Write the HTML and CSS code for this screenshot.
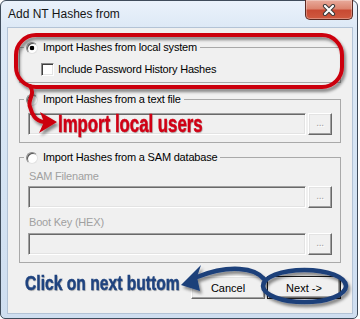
FILE: index.html
```html
<!DOCTYPE html>
<html>
<head>
<meta charset="utf-8">
<title>Add NT Hashes from</title>
<link rel="stylesheet" href="styles.css">
</head>
<body>
<div class="window">
  <div class="titlebar">
    <span class="title">Add NT Hashes from</span>
    <div class="close">
      <svg width="14" height="12" viewBox="0 0 14 12">
        <path d="M3 2 L11 10 M11 2 L3 10" stroke="#3a3a3a" stroke-width="4.2" stroke-linecap="round" fill="none"/>
        <path d="M3 2 L11 10 M11 2 L3 10" stroke="#ffffff" stroke-width="2.2" stroke-linecap="round" fill="none"/>
      </svg>
    </div>
  </div>
  <div class="client">
    <fieldset class="group g1">
      <legend><span class="radio on"></span>Import Hashes from local system</legend>
      <div class="check"><span class="box"></span>Include Password History Hashes</div>
    </fieldset>
    <fieldset class="group g2">
      <legend><span class="radio"></span>Import Hashes from a text file</legend>
      <div class="filerow first"><div class="field"></div><div class="browse">...</div></div>
    </fieldset>
    <fieldset class="group g3">
      <legend><span class="radio"></span>Import Hashes from a SAM database</legend>
      <div class="lbl first">SAM Filename</div>
      <div class="filerow f1"><div class="field"></div><div class="browse">...</div></div>
      <div class="lbl second">Boot Key (HEX)</div>
      <div class="filerow f2"><div class="field"></div><div class="browse">...</div></div>
    </fieldset>
    <div class="buttons">
      <div class="btn">Cancel</div>
      <div class="btn def">Next -&gt;</div>
    </div>
  </div>
</div>
<div class="overlay">
  <svg class="annot" width="360" height="319" viewBox="0 0 360 319">
    <defs>
      <filter id="sh" x="-20%" y="-30%" width="140%" height="170%">
        <feDropShadow dx="2" dy="3" stdDeviation="1.8" flood-color="#000" flood-opacity="0.45"/>
      </filter>
    </defs>
    <g filter="url(#sh)" fill="none" stroke="#cc0010" stroke-width="4" stroke-linecap="round">
      <rect x="16" y="35" width="326" height="52" rx="20"/>
      <path d="M30 86 C36 94 27 100 30 107 C32 114 35 121 44 122"/>
      <polygon points="57,122 40,112 44,122 39,133" fill="#cc0010" stroke="none"/>
    </g>
    <g filter="url(#sh)" fill="none" stroke="#1d3f7a" stroke-width="4.5" stroke-linecap="round">
      <ellipse cx="304.5" cy="286" rx="41.5" ry="16"/>
      <path d="M264 279 C255 268 230 264 197 277"/>
      <polygon points="181,285 201,265 197,277 200,291" fill="#1d3f7a" stroke="none"/>
    </g>
  </svg>
  <div class="note red">Import local users</div>
  <div class="note blue">Click on next buttom</div>
</div>
</body>
</html>
```

FILE: styles.css
```css
* { box-sizing: border-box; }
html, body { margin: 0; padding: 0; background: #ffffff; }
body {
  position: relative;
  width: 360px;
  height: 319px;
  overflow: hidden;
  font-family: "Liberation Sans", Arial, sans-serif;
  font-size: 11px;
  letter-spacing: -0.2px;
  color: #000;
}
.window {
  width: 358px;
  height: 319px;
  border: 1px solid #3f4c5b;
  border-radius: 6px 6px 5px 5px;
  background: linear-gradient(180deg, #eaf2fb 0, #dde9f6 26px, #d4e3f3 60%, #cfdef0 100%);
  padding: 0 4px 4px 6px;
  display: flex;
  flex-direction: column;
}
.titlebar {
  height: 26px;
  flex: none;
  display: flex;
  align-items: flex-start;
}
.title {
  font-size: 12px;
  line-height: 14px;
  letter-spacing: 0;
  margin: 6px 0 0 1px;
  color: #151515;
}
.close {
  margin-left: auto;
  margin-top: -1px;
  width: 48px;
  height: 20px;
  border: 1px solid #5b2a22;
  border-top: none;
  border-radius: 0 0 5px 5px;
  background: linear-gradient(180deg, #e8ab9c 0, #dc8570 45%, #c84a33 55%, #cf5a40 100%);
  box-shadow: inset 0 0 0 1px rgba(255, 255, 255, 0.3);
  display: flex;
  align-items: center;
  justify-content: center;
}
.client {
  flex: 1;
  background: #f0f0f0;
  border: 1px solid #b3c3d6;
  padding: 13px 11px 0 11px;
  display: flex;
  flex-direction: column;
}
.group {
  margin: 0;
  padding: 0;
  border: 1px solid #a9a9a9;
  min-width: 0;
}
.group legend {
  margin-left: 4px;
  padding: 0 3px 0 2px;
  height: 13px;
  line-height: 13px;
  display: flex;
  align-items: center;
}
.g1 { padding-bottom: 6px; }
.g2 { margin-top: 10px; padding-bottom: 7px; }
.g3 { margin-top: 8px; padding-bottom: 7px; }
.radio {
  width: 12px;
  height: 12px;
  border-radius: 50%;
  background: #fff;
  border: 1px solid;
  border-color: #8a8a8a #e2e2e2 #e2e2e2 #8a8a8a;
  box-shadow: inset 1px 1px 0 #555;
  margin-right: 5px;
  flex: none;
}
.radio.on {
  background: radial-gradient(circle at 50% 50%, #000 0, #000 2px, #fff 2.6px);
}
.check {
  display: flex;
  align-items: center;
  height: 14px;
  margin: 8px 0 0 21px;
}
.box {
  width: 13px;
  height: 13px;
  background: #fff;
  border: 1px solid;
  border-color: #8a8a8a #fff #fff #8a8a8a;
  box-shadow: inset 1px 1px 0 #404040, inset -1px -1px 0 #e3e3e3;
  margin-right: 4px;
  flex: none;
}
.filerow {
  display: flex;
  gap: 2px;
  height: 22px;
  margin: 0 8px 0 8px;
}
.filerow.first { margin-top: 7px; }
.filerow.f1 { margin-top: 3px; }
.filerow.f2 { margin-top: 4px; }
.field {
  flex: 1;
  background: #f0f0f0;
  border: 1px solid;
  border-color: #a0a0a0 #fff #fff #a0a0a0;
  box-shadow: inset 1px 1px 0 #696969, inset -1px -1px 0 #e3e3e3;
}
.browse {
  width: 24px;
  flex: none;
  background: #f0f0f0;
  border: 1px solid;
  border-color: #fff #696969 #696969 #fff;
  box-shadow: inset -1px -1px 0 #a0a0a0, inset 1px 1px 0 #e3e3e3;
  color: #a0a0a0;
  text-shadow: 1px 1px 0 #fff;
  font-size: 10px;
  line-height: 18px;
  text-align: center;
}
.lbl {
  color: #a0a0a0;
  height: 13px;
  line-height: 13px;
  margin-left: 9px;
}
.lbl.first { margin-top: 6px; }
.lbl.second { margin-top: 8px; }
.buttons {
  display: flex;
  justify-content: flex-end;
  gap: 2px;
  margin-top: 13px;
}
.btn {
  width: 74px;
  height: 23px;
  display: flex;
  align-items: center;
  justify-content: center;
  background: #f0f0f0;
  border: 1px solid;
  border-color: #fff #696969 #696969 #fff;
  box-shadow: inset -1px -1px 0 #a0a0a0, inset 1px 1px 0 #e3e3e3;
  letter-spacing: 0;
}
.btn.def {
  border-color: #1a1a1a;
  box-shadow: inset 1px 1px 0 #fff, inset -1px -1px 0 #696969, inset -2px -2px 0 #a0a0a0;
}
.overlay {
  position: absolute;
  left: 0;
  top: 0;
  width: 360px;
  height: 319px;
  pointer-events: none;
}
.annot {
  position: absolute;
  left: 0;
  top: 0;
}
.note {
  position: absolute;
  font-family: "Liberation Sans", Arial, sans-serif;
  font-weight: bold;
  letter-spacing: 0;
  white-space: nowrap;
  transform-origin: 0 0;
  -webkit-text-stroke: 0.5px currentColor;
  text-shadow: 1px 1px 1px rgba(0, 0, 0, 0.3);
}
.note.red {
  left: 58px;
  top: 113px;
  font-size: 23px;
  line-height: 23px;
  color: #d10015;
  transform: scaleX(0.73);
}
.note.blue {
  left: 25px;
  top: 272px;
  font-size: 21px;
  line-height: 21px;
  color: #1f437f;
  transform: scaleX(0.745);
}
```
